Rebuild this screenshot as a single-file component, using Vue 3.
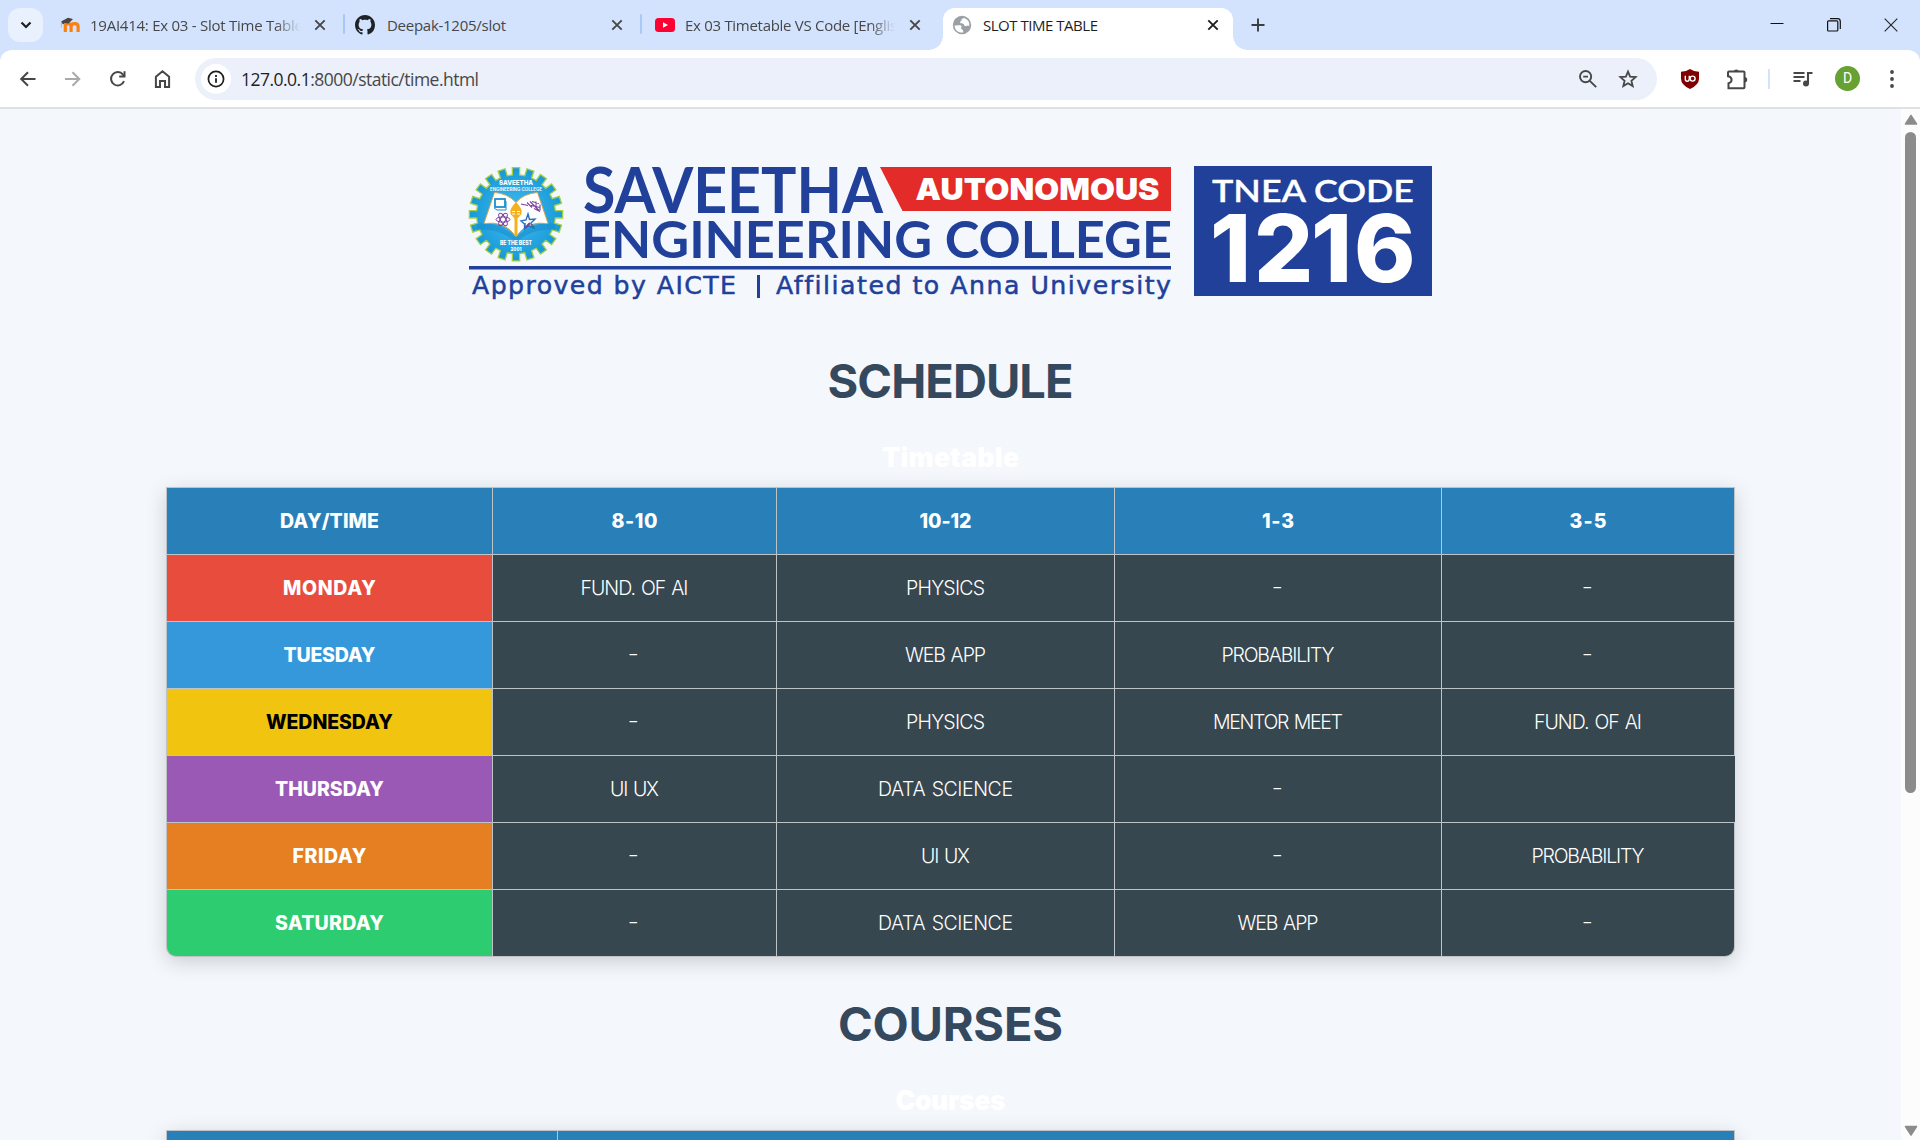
<script setup>
const tabs = [
  { icon: 'moodle', title: '19AI414: Ex 03 - Slot Time Table', width: 210, gap: 10, pad: 10, fit: 213, box: 295, fade: true },
  { icon: 'github', title: 'Deepak-1205/slot', width: 210, gap: 12, pad: 10, fit: 119, box: 297 },
  { icon: 'youtube', title: 'Ex 03 Timetable VS Code [English', width: 210, gap: 10, pad: 13, fit: 221, box: 297, fade: true },
  { icon: 'globe', title: 'SLOT TIME TABLE', width: 210, gap: 11, pad: 9, fit: 115, box: 290, active: true },
]

const header = [
  ['DAY/TIME', 99],
  ['8-10', 46],
  ['10-12', 52],
  ['1-3', 32],
  ['3-5', 37],
]

const fund = ['FUND. OF AI', 108]
const physics = ['PHYSICS', 79]
const web = ['WEB APP', 81]
const prob = ['PROBABILITY', 113]
const mentor = ['MENTOR MEET', 130]
const data = ['DATA SCIENCE', 135]
const uiux = ['UI UX', 49]
const none = ['-', 9]

const rows = [
  { day: 'MONDAY', fit: 93, cls: 'mon', cells: [fund, physics, none, none] },
  { day: 'TUESDAY', fit: 92, cls: 'tue', cells: [none, web, prob, none] },
  { day: 'WEDNESDAY', fit: 127, cls: 'wed', cells: [none, physics, mentor, fund] },
  { day: 'THURSDAY', fit: 109, cls: 'thu', cells: [uiux, data, none, ['', 0]] },
  { day: 'FRIDAY', fit: 74, cls: 'fri', cells: [none, uiux, none, prob] },
  { day: 'SATURDAY', fit: 109, cls: 'sat', cells: [none, data, web, none] },
]

// Tracks a label out (or in) so that it takes the given width.
const vFit = {
  mounted(el, { value }) {
    const n = el.textContent.length
    if (n < 2 || !value) return
    const gap = (value - el.getBoundingClientRect().width) / (n - 1)
    el.style.letterSpacing = gap + 'px'
    el.style.marginRight = -gap + 'px'
  },
}

function gearPath(cx, cy, inner, outer, teeth) {
  const step = (Math.PI * 2) / teeth
  const pts = []
  for (let i = 0; i < teeth; i++) {
    const a = i * step - Math.PI / 2
    for (const [r, o] of [[inner, -0.29], [outer, -0.25], [outer, 0.25], [inner, 0.29]]) {
      pts.push((cx + r * Math.cos(a + o * step)).toFixed(2) + ',' + (cy + r * Math.sin(a + o * step)).toFixed(2))
    }
  }
  return 'M' + pts.join('L') + 'Z'
}
const gear = gearPath(516, 214.3, 39.5, 46.8, 20)
</script>

<template>
  <div class="window">
    <div class="strip">
      <button class="search">
        <svg width="12" height="8" viewBox="0 0 12 8"><path d="M1.500 1.500 6 6l4.500-4.500" fill="none" stroke="#1f1f1f" stroke-width="2.200" /></svg>
      </button>
      <div class="tabs">
        <div v-for="(t, i) in tabs" :key="i" class="tab" :class="{ active: t.active, divided: i < 2 }" :style="{ width: t.box + 'px', paddingLeft: t.pad + 'px' }">
          <svg v-if="t.icon === 'moodle'" class="fav" width="20" height="20" viewBox="0 0 20 20">
            <path d="M5.300 17V11.500q0-2.800 2.900-2.800t2.900 2.800V17M11.100 17v-5.500q0-2.800 3.500-2.800t3.500 2.800V17" fill="none" stroke="#f98012" stroke-width="3.200" />
            <path d="m1 6.500 7-3.800 5 1.300-4.500 4.500-3.500-.5-2 1.500z" fill="#4a4543" /><path d="M1.300 6.500v6" stroke="#b9a99c" stroke-width=".8" />
          </svg>
          <svg v-else-if="t.icon === 'github'" class="fav" width="20" height="20" viewBox="0 0 16 16">
            <path fill="#1f2328" d="M8 0C3.580 0 0 3.580 0 8c0 3.540 2.290 6.530 5.470 7.590.4.070.55-.17.55-.38 0-.19-.01-.82-.01-1.490-2.010.37-2.530-.49-2.690-.94-.09-.23-.48-.94-.82-1.130-.28-.15-.68-.52-.01-.53.63-.01 1.080.58 1.230.82.72 1.210 1.870.87 2.330.66.07-.52.28-.87.51-1.070-1.780-.2-3.640-.89-3.640-3.950 0-.87.31-1.590.82-2.150-.08-.2-.36-1.020.08-2.120 0 0 .67-.21 2.200.82.64-.18 1.320-.27 2-.27s1.360.09 2 .27c1.530-1.040 2.200-.82 2.200-.82.44 1.100.16 1.920.08 2.120.51.56.82 1.270.82 2.150 0 3.070-1.870 3.750-3.650 3.950.29.25.54.73.54 1.480 0 1.070-.01 1.930-.01 2.200 0 .21.15.46.55.38A8.010 8.010 0 0 0 16 8c0-4.420-3.580-8-8-8" />
          </svg>
          <svg v-else-if="t.icon === 'youtube'" class="fav" width="20" height="20" viewBox="0 0 20 20">
            <rect y="3" width="20" height="14" rx="3.500" fill="#ff0033" /><path d="m8 7.300 5 2.700-5 2.700z" fill="#fff" />
          </svg>
          <svg v-else class="fav" width="20" height="20" viewBox="0 0 20 20">
            <circle cx="10" cy="10" r="9.200" fill="#9aa0a6" />
            <path d="M2.600 10.200c2.500.6 5.200-.6 6.600.6s-.8 1.600-.2 2.700 2.600.7 2.200 4C6.500 18.300 2.500 15 2.600 10.200M12 2.900c-1.600.5-3 1.300-2.600 2.400s-1.600.7-1.300 2.300 3.200.4 3.700 2 2.400 2 3.400 1.200 1.600.6 2 .2C18 7 15.600 4 12 2.900" fill="#fff" />
          </svg>
          <span class="title" :class="{ fade: t.fade }" :style="{ width: t.width + 'px', marginLeft: t.gap + 'px' }"><span v-fit="t.fit">{{ t.title }}</span></span>
          <svg class="x" width="12" height="12" viewBox="0 0 12 12"><path d="m1.300 1.300 9.400 9.400m0-9.400-9.400 9.400" stroke="currentColor" stroke-width="1.900" /></svg>
        </div>
      </div>
      <svg class="plus" width="14" height="14" viewBox="0 0 14 14"><path d="M7 .5v13M.5 7h13" stroke="#3c3c3c" stroke-width="1.900" /></svg>
      <div class="controls">
        <svg width="14" height="14" viewBox="0 0 14 14"><path d="M.5 5.500h13" stroke="#111" /></svg>
        <svg width="14" height="14" viewBox="0 0 14 14" fill="none" stroke="#111"><rect x=".6" y="2.800" width="10.200" height="10.200" rx="1" stroke-width="1.200" /><path d="M3 .7h7.500q2.800 0 2.800 2.800V11" stroke-width="1.200" /></svg>
        <svg width="14" height="14" viewBox="0 0 14 14"><path d="m.7.7 12.600 12.600m0-12.600L.7 13.300" stroke="#222" stroke-width="1.100" /></svg>
      </div>
    </div>

    <div class="toolbar">
      <div class="nav">
        <svg width="18" height="18" viewBox="0 0 18 18" fill="none" stroke="#474747" stroke-width="2"><path d="M16.500 9H2.500M9 2.200 2.200 9 9 15.800" /></svg>
        <svg width="18" height="18" viewBox="0 0 18 18" fill="none" stroke="#a9a9a9" stroke-width="2"><path d="M1 9h14M8.500 2.200 15.300 9l-6.800 6.800" /></svg>
        <svg width="18" height="18" viewBox="0 0 18 18" fill="none" stroke="#474747" stroke-width="2"><path d="M15 11.200A6.700 6.700 0 1 1 14 4.600L15.500 6.300" /><path d="M15.500 1.300v5.200h-5.300" /></svg>
        <svg width="18" height="20" viewBox="0 0 18 20" fill="none" stroke="#474747" stroke-width="2"><path d="M1.900 18V7.700L8.500 2.300l6.600 5.400V18H11v-6H6v6z" /></svg>
      </div>
      <div class="omni">
        <span class="info"><svg width="18" height="18" viewBox="0 0 18 18"><circle cx="9" cy="9" r="7.600" fill="none" stroke="#1f1f1f" stroke-width="1.700" /><path d="M9 8.200v4.600M9 5v1.900" stroke="#1f1f1f" stroke-width="1.800" /></svg></span>
        <span class="url" v-fit="238"><b>127.0.0.1</b>:8000/static/time.html</span>
        <svg class="mag" width="20" height="20" viewBox="0 0 20 20" fill="none" stroke="#474747" stroke-width="1.900"><circle cx="7.600" cy="7.600" r="5.600" /><path d="m11.800 11.800 6.400 6.400M5.200 7.600h4.800" /></svg>
        <svg width="20" height="20" viewBox="0 0 20 20" fill="none" stroke="#474747" stroke-width="1.800"><path d="m10 2.600 2.100 5.100 5.500.4-4.200 3.600 1.300 5.400-4.700-2.900-4.700 2.900 1.300-5.400-4.200-3.600 5.500-.4z" /></svg>
      </div>
      <svg class="ublock" width="20" height="20" viewBox="0 0 20 20"><path d="M10 0q3.500 2.500 9 2.700v6.800Q19 16 10 20 1 16 1 9.500V2.700Q6.500 2.500 10 0" fill="#800000" /><path d="M5.300 6.800v3.500q0 2 1.900 2t1.900-2M9.300 6.800v3.500" fill="none" stroke="#fff" stroke-width="1.400" /><circle cx="12.600" cy="9.600" r="2.500" fill="none" stroke="#fff" stroke-width="1.400" /></svg>
      <svg class="puzzle" width="22" height="22" viewBox="0 0 22 22"><path d="M2 4.500q0-1 1-1h14.500q1 0 1 1v14.700q0 1-1 1H2.500v-5c4.200-1 4.200-6.200-.5-7z" fill="none" stroke="#474747" stroke-width="2" /><path d="M7.600 3.500a2.800 2.800 0 0 1 5.400 0zM18.500 9a2.700 2.700 0 0 1 0 5.400z" fill="#474747" /></svg>
      <i class="bar" />
      <svg class="media" width="20" height="16" viewBox="0 0 20 16"><path d="M.5 2h11M.5 6h11M.5 10h7" stroke="#474747" stroke-width="1.900" /><path d="M15 12.500V2h4.500" fill="none" stroke="#474747" stroke-width="2.100" /><circle cx="13" cy="12.500" r="3" fill="#474747" /></svg>
      <span class="avatar">D</span>
      <svg class="dots" width="4" height="18" viewBox="0 0 4 18" fill="#474747"><circle cx="2" cy="2" r="1.900" /><circle cx="2" cy="9" r="1.900" /><circle cx="2" cy="16" r="1.900" /></svg>
    </div>

    <div class="view">
      <main>
        <svg class="logo" width="980" height="150" viewBox="460 155 980 150">
          <defs><radialGradient id="disc"><stop offset="0" stop-color="#45bdf0" /><stop offset="1" stop-color="#1799d8" /></radialGradient></defs>
          <path :d="gear" fill="url(#disc)" stroke="#a6cf45" stroke-width="1.300" />
          <path d="M477 224q20-4 39 13 19-17 39-13v6q-20-3-39 12-19-15-39-12z" fill="#1287c8" opacity=".45" />
          <path d="M494.500 192.500q13 1 21.500 10 8-9 21.500-10L548 223.500q-21-3-32 13-11-16-32-13z" fill="#fff" stroke="#e6a23c" stroke-width=".9" />
          <g fill="none" stroke="#1c8fd0" stroke-width="1.800"><rect x="495" y="199" width="10" height="8" /><path d="m494 208 3 2h9v-9" stroke-width="1" /></g>
          <g fill="none" stroke="#7a3f9d" stroke-width="1"><ellipse cx="503" cy="219.500" rx="7" ry="2.600" /><ellipse cx="503" cy="219.500" rx="7" ry="2.600" transform="rotate(60 503 219.500)" /><ellipse cx="503" cy="219.500" rx="7" ry="2.600" transform="rotate(120 503 219.500)" /></g>
          <path d="m521 204 7 1.500m-1-3 5 5m-2-6 9 9m-7-9 7 2m-8 2 9 2m-6 1 6 3m-4-10v5m4-2v6" stroke="#7a3f9d" stroke-width="1.100" fill="none" />
          <path d="m528 214 1.500 5.500 5.500-.5-4 4 3 5-5.500-2-4 3v-5l-3.500-3 5-1zm-3 9v6m6-5 3 3" stroke="#2a6fc0" stroke-width="1.400" fill="none" /><path d="m525 228 5-5" stroke="#7a3f9d" stroke-width="2" />
          <path d="M516 202q7 7 5.500 12l-4 4.500V236h-3v-17.500l-4-4.500Q509 209 516 202" fill="#f4b01e" /><path d="M512 211.500h3m2 0h3m-8 2.500h3m2 0h3" stroke="#fff" stroke-width="1" />
          <g fill="#fff" font-family="Inter, sans-serif" font-weight="800">
            <text x="499" y="184.700" font-size="6.600" textLength="34" lengthAdjust="spacingAndGlyphs">SAVEETHA</text>
            <text x="490" y="191" font-size="4.700" textLength="52" lengthAdjust="spacingAndGlyphs" font-weight="600">ENGINEERING COLLEGE</text>
            <text x="500" y="245" font-size="5.500" textLength="32" lengthAdjust="spacingAndGlyphs">BE THE BEST</text>
            <text x="510.500" y="250.700" font-size="4.800" textLength="11" lengthAdjust="spacingAndGlyphs">2001</text>
          </g>
          <g fill="#20409a" font-family="Lato, sans-serif" font-weight="700">
            <text x="583" y="213" font-size="63" textLength="300" lengthAdjust="spacingAndGlyphs">SAVEETHA</text>
            <text x="581" y="258" font-size="51.500" textLength="591" lengthAdjust="spacingAndGlyphs">ENGINEERING COLLEGE</text>
          </g>
          <path d="M469 266h702v3.500H469z" fill="#20409a" />
          <g class="approved" fill="#20409a" font-family="'DejaVu Sans', sans-serif" font-size="25.200" stroke="#20409a" stroke-width=".5">
            <text x="472" y="294" textLength="264">Approved by AICTE</text>
            <path d="M757 275h3v23h-3z" stroke="none" />
            <text x="776" y="294" textLength="395">Affiliated to Anna University</text>
          </g>
          <path d="M880 167h291v44H902.500z" fill="#e32c2a" />
          <text x="915.500" y="200" fill="#fff" font-family="Inter, sans-serif" font-weight="900" font-size="30.500" textLength="244" lengthAdjust="spacingAndGlyphs">AUTONOMOUS</text>
          <path d="M1194 166h238v130h-238z" fill="#20409a" />
          <g fill="#fff" font-family="Inter, sans-serif">
            <text x="1212" y="202" font-size="31" font-weight="600" font-family="Lato, sans-serif" textLength="202" stroke="#fff" stroke-width=".3" lengthAdjust="spacingAndGlyphs">TNEA CODE</text>
            <text x="1210 1254 1311 1354" y="281.500" font-size="93" font-weight="850">1216</text>
          </g>
        </svg>

        <h1><span v-fit="246">SCHEDULE</span></h1>
        <div class="caption"><span v-fit="137">Timetable</span></div>
        <section class="grid">
          <div v-for="h in header" :key="h[0]" class="cell head"><span v-fit="h[1]">{{ h[0] }}</span></div>
          <template v-for="r in rows" :key="r.day">
            <div class="cell day" :class="r.cls"><span v-fit="r.fit">{{ r.day }}</span></div>
            <div v-for="(c, i) in r.cells" :key="i" class="cell" :class="{ blank: !c[0], none: c[0] === '-' }"><span v-fit="c[1]">{{ c[0] }}</span></div>
          </template>
        </section>

        <h1 class="second"><span v-fit="225">COURSES</span></h1>
        <div class="caption"><span v-fit="110">Courses</span></div>
        <section class="grid courses">
          <div class="cell head" />
          <div class="cell head" />
        </section>
      </main>
      <div class="scroll">
        <svg width="14" height="12" viewBox="0 0 14 12"><path d="M7 1.500 12.500 10h-11z" fill="#8b8b8b" stroke="#8b8b8b" stroke-width="1.500" stroke-linejoin="round" /></svg>
        <i />
        <svg class="down" width="14" height="12" viewBox="0 0 14 12"><path d="M7 10 12.500 1.500h-11z" fill="#8b8b8b" stroke="#8b8b8b" stroke-width="1.500" stroke-linejoin="round" /></svg>
      </div>
    </div>
  </div>
</template>

<style>
html, body { overflow: hidden; background: #f4f7fc; }
</style>

<style scoped>
* { box-sizing: border-box; }
svg { display: block; flex: none; }
.window { width: 1920px; height: 1140px; overflow: hidden; display: flex; flex-direction: column; background: #d3e3fd; font-family: "Open Sans", sans-serif; }
.strip { height: 50px; flex: none; display: flex; align-items: center; background: #d3e3fd; }
.search { margin-left: 8px; width: 35px; height: 34px; border: 0; padding: 0; border-radius: 12px; background: #e9f1fe; display: flex; align-items: center; justify-content: center; }
.tabs { display: flex; height: 50px; align-items: flex-end; margin-left: 7px; }
.tab { position: relative; height: 42px; display: flex; align-items: center; padding-bottom: 8px; color: #474747; font-size: 15px; white-space: nowrap; }
.tab.active { background: #fff; border-radius: 12px 12px 0 0; color: #1f1f1f; margin-left: 4px; }
.tab.active::before, .tab.active::after { content: ""; position: absolute; bottom: 0; width: 14px; height: 14px; }
.tab.active::before { left: -14px; background: radial-gradient(circle at 0 0, transparent 13.5px, #fff 14px); }
.tab.active::after { right: -14px; background: radial-gradient(circle at 100% 0, transparent 13.5px, #fff 14px); }
.tab.divided::after { content: ""; position: absolute; right: 0; top: 6px; width: 2px; height: 20px; background: #a8c7fa; border-radius: 1px; }
.title { flex: none; overflow: hidden; height: 24px; line-height: 24px; }
.title > span { display: inline-block; }
.fade { -webkit-mask-image: linear-gradient(90deg, #000 88%, transparent); mask-image: linear-gradient(90deg, #000 88%, transparent); }
.x { margin-left: 14px; }
.plus { margin-left: 18px; }
.controls { margin: 0 22px 0 auto; display: flex; gap: 43px; }
.toolbar { height: 59px; flex: none; background: #fff; border-radius: 12px 12px 0 0; border-bottom: 2px solid #dfe1e3; display: flex; align-items: center; }
.nav { display: flex; align-items: center; gap: 27px; padding-left: 19px; width: 195px; }
.omni { width: 1462px; height: 42px; border-radius: 21px; background: #ebf0fa; display: flex; align-items: center; padding-left: 6px; margin-top: 1px; }
.info { width: 30px; height: 30px; border-radius: 50%; background: #fff; display: flex; align-items: center; justify-content: center; }
.url { margin-left: 10px; font-size: 17.5px; line-height: 24px; color: #474747; white-space: nowrap; }
.url b { font-weight: 400; color: #1f1f1f; }
.mag { margin: 0 20px 0 auto; }
.omni > svg:last-child { margin-right: 19px; }
.ublock { margin-left: 23px; }
.puzzle { margin-left: 26px; }
.bar { width: 2px; height: 20px; background: #d3e3fd; margin-left: 20px; }
.media { margin-left: 23px; }
.avatar { margin-left: 22px; width: 25px; height: 25px; border-radius: 50%; background: #67a033; color: #fff; font: 400 14px/25px Roboto, sans-serif; text-align: center; }
.dots { margin-left: 30px; }
.view { height: 1031px; display: flex; background: #f4f7fc; }
main { width: 1901px; padding: 46px 0 0 166px; overflow: hidden; font-family: Inter, sans-serif; }
.logo { margin-left: 294px; }
.approved { font-variant-ligatures: none; }
h1 { margin: 40px 0 0; width: 1569px; height: 72px; line-height: 72px; text-align: center; font-size: 47px; font-weight: 750; color: #34495e; }
h1.second { margin-top: 31px; }
h1 span, .caption span, .cell span { display: inline-block; }
.caption { margin: 20px 0 10px; width: 1569px; height: 40px; line-height: 40px; text-align: center; font-size: 26.5px; font-weight: 900; color: #fff; }
.grid { width: 1569px; padding: 1px; display: grid; grid-template-columns: 325px 283px 337px 326px 292px; grid-auto-rows: 66px; gap: 1px; background: #bdc3c7; border-radius: 0 0 10px 10px; box-shadow: 0 5px 20px rgba(0, 0, 0, .17); }
.grid.courses { grid-template-columns: 390px 1176px; }
.cell { background: #37474f; color: #fff; display: flex; align-items: center; justify-content: center; font-size: 19.5px; font-weight: 270; white-space: nowrap; word-spacing: 1.5px; }
.none span { transform: scaleX(1.25) translate(-1px, -1px); }
.head { background: #2980b9; font-weight: 800; }
.day { font-weight: 800; }
.mon { background: #e74c3c; }
.tue { background: #3498db; }
.wed { background: #f1c40f; color: #000; }
.thu { background: #9b59b6; }
.fri { background: #e67e22; }
.sat { background: #2ecc71; border-bottom-left-radius: 9px; }
.cell:last-child { border-bottom-right-radius: 9px; }
.courses .cell:last-child { border-radius: 0; }
.blank { margin-right: -1px; }
.scroll { width: 19px; background: #fcfcfc; display: flex; flex-direction: column; align-items: center; padding-top: 5px; }
.scroll i { width: 11px; height: 661px; margin-top: 6px; border-radius: 6px; background: #8b8b8b; }
.down { margin: auto 0 3px; }
</style>
